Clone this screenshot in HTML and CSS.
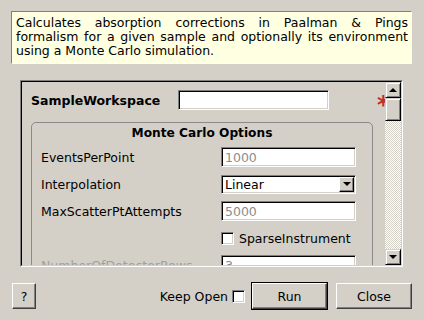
FILE: index.html
```html
<html lang="en"><head>
    <meta charset="UTF-8">
    <meta name="viewport" content="width=device-width, initial-scale=1.0">
    <title>MonteCarloAbsorption</title>
    <link rel="stylesheet" href="styles.css">
</head>
<body>
    <div class="dialog">
        <!-- Algorithm summary -->
        <p class="description">Calculates absorption corrections in Paalman &amp; Pings formalism for a given sample and optionally its environment using a Monte Carlo simulation.</p>

        <!-- Property scroll area -->
        <div class="scroll-frame">
            <div class="scroll-inner">
                <div class="viewport">
                    <div class="prop-row top-row">
                        <label class="prop-label bold">SampleWorkspace</label>
                        <input type="text" class="line-edit wide">
                        <span class="required">*</span>
                    </div>

                    <div class="group">
                        <div class="group-title">Monte Carlo Options</div>
                        <div class="prop-row">
                            <label class="prop-label">EventsPerPoint</label>
                            <input type="text" class="line-edit" placeholder="1000">
                        </div>
                        <div class="prop-row">
                            <label class="prop-label">Interpolation</label>
                            <div class="combo">
                                <span class="combo-text">Linear</span>
                                <span class="combo-btn"><span class="arrow-down"></span></span>
                            </div>
                        </div>
                        <div class="prop-row">
                            <label class="prop-label">MaxScatterPtAttempts</label>
                            <input type="text" class="line-edit" placeholder="5000">
                        </div>
                        <div class="prop-row">
                            <label class="prop-label"></label>
                            <label class="check-label"><input type="checkbox" class="check"> SparseInstrument</label>
                        </div>
                        <div class="prop-row disabled">
                            <label class="prop-label">NumberOfDetectorRows</label>
                            <input type="text" class="line-edit" placeholder="3" disabled>
                        </div>
                    </div>
                </div>

                <div class="scrollbar">
                    <div class="sb-btn"><span class="arrow-up"></span></div>
                    <div class="sb-thumb"></div>
                    <div class="sb-track"></div>
                    <div class="sb-btn"><span class="arrow-down"></span></div>
                </div>
            </div>
        </div>

        <!-- Dialog buttons -->
        <div class="button-row">
            <button class="btn help-btn">?</button>
            <div class="spacer"></div>
            <label class="keep-open">Keep Open <input type="checkbox" class="check"></label>
            <button class="btn default-btn">Run</button>
            <button class="btn close-btn">Close</button>
        </div>
    </div>
</body></html>
```

FILE: styles.css
```css
body {
    margin: 0;
    background-color: #d4d0c8;
    font-family: "DejaVu Sans", sans-serif;
    font-size: 12.5px;
    color: #000;
}
.dialog {
    width: 424px;
    height: 320px;
    overflow: hidden;
}
.description {
    box-sizing: border-box;
    margin: 11px 12px 0 11px;
    height: 53px;
    padding: 4px 3px 0 4px;
    background: #ffffe1;
    border: 1px solid;
    border-color: #808080 #ffffff #ffffff #808080;
    line-height: 14px;
    text-align: justify;
}
.scroll-frame {
    box-sizing: border-box;
    margin: 16px 0 0 20px;
    width: 383px;
    height: 187px;
    border: 1px solid;
    border-color: #808080 #ffffff #ffffff #808080;
}
.scroll-inner {
    height: 100%;
    box-sizing: border-box;
    border: 1px solid;
    border-color: #000 #d4d0c8 #d4d0c8 #000;
    display: flex;
}
.viewport {
    flex: 1;
    overflow: hidden;
    padding-left: 9px;
    white-space: nowrap;
}
.prop-row {
    display: flex;
    align-items: center;
    height: 20px;
    margin-top: 7px;
}
.top-row {
    margin-top: 8px;
}
.prop-label {
    width: 147px;
    flex-shrink: 0;
}
.bold {
    font-weight: bold;
}
.line-edit {
    box-sizing: border-box;
    width: 135px;
    height: 20px;
    margin: 0;
    padding: 0 3px;
    font-family: inherit;
    font-size: 12.5px;
    background: #fff;
    border: 1px solid;
    border-color: #808080 #ffffff #ffffff #808080;
    box-shadow: inset 1px 1px #000, inset -1px -1px #d4d0c8;
    outline: none;
}
.line-edit::placeholder {
    color: #8c8c8c;
}
.line-edit.wide {
    width: 151px;
}
.required {
    margin-left: 48px;
    color: #c0302a;
    font-size: 24px;
    font-weight: bold;
    line-height: 20px;
    padding-top: 10px;
}
.group {
    box-sizing: border-box;
    width: 342px;
    height: 200px;
    margin-top: 12px;
    padding: 3px 0 0 9px;
    border: 1px solid #8a8a8a;
    border-radius: 5px;
}
.group-title {
    text-align: center;
    font-weight: bold;
    font-size: 12.2px;
    line-height: 14px;
    padding-right: 9px;
}
.group .prop-label {
    width: 180px;
}
.combo {
    box-sizing: border-box;
    width: 135px;
    height: 19px;
    display: flex;
    background: #fff;
    border: 1px solid;
    border-color: #808080 #ffffff #ffffff #808080;
    box-shadow: inset 1px 1px #000, inset -1px -1px #d4d0c8;
    padding: 1px;
}
.combo-text {
    flex: 1;
    padding-left: 2px;
    line-height: 15px;
}
.combo-btn {
    box-sizing: border-box;
    width: 15px;
    display: flex;
    align-items: center;
    justify-content: center;
    background: #d4d0c8;
    border: 1px solid;
    border-color: #ffffff #000 #000 #ffffff;
    box-shadow: inset -1px -1px #808080;
}
.arrow-down, .arrow-up {
    width: 0;
    height: 0;
    border-left: 4px solid transparent;
    border-right: 4px solid transparent;
}
.arrow-down {
    border-top: 4px solid #000;
}
.arrow-up {
    border-bottom: 4px solid #000;
}
.check-label {
    display: flex;
    align-items: center;
    gap: 5px;
}
.check {
    appearance: none;
    box-sizing: border-box;
    width: 13px;
    height: 13px;
    margin: 0;
    background: #fff;
    border: 1px solid;
    border-color: #808080 #ffffff #ffffff #808080;
    box-shadow: inset 1px 1px #000, inset -1px -1px #d4d0c8;
}
.disabled .prop-label {
    color: #a0a0a0;
}
.scrollbar {
    width: 16px;
    display: flex;
    flex-direction: column;
}
.sb-btn, .sb-thumb {
    box-sizing: border-box;
    height: 16px;
    background: #d4d0c8;
    border: 1px solid;
    border-color: #d4d0c8 #000 #000 #d4d0c8;
    box-shadow: inset 1px 1px #fff, inset -1px -1px #808080;
    display: flex;
    align-items: center;
    justify-content: center;
}
.sb-thumb {
    height: 23px;
}
.sb-track {
    flex: 1;
    background: repeating-conic-gradient(#ffffff 0 25%, #d4d0c8 0 50%) 0 0 / 2px 2px;
}
.button-row {
    display: flex;
    align-items: center;
    margin-top: 16px;
    padding: 0 12px;
}
.spacer {
    flex: 1;
}
.btn {
    box-sizing: border-box;
    height: 26px;
    margin: 0;
    padding: 0;
    font-family: inherit;
    font-size: 12.5px;
    color: #000;
    background: #d4d0c8;
    border: 1px solid;
    border-color: #ffffff #404040 #404040 #ffffff;
    box-shadow: inset -1px -1px #808080;
}
.help-btn {
    width: 24px;
}
.keep-open {
    display: flex;
    align-items: center;
    gap: 4px;
    margin-right: 7px;
}
.default-btn {
    width: 75px;
    margin-right: 9px;
    outline: 1px solid #000;
}
.close-btn {
    width: 76px;
}
```
